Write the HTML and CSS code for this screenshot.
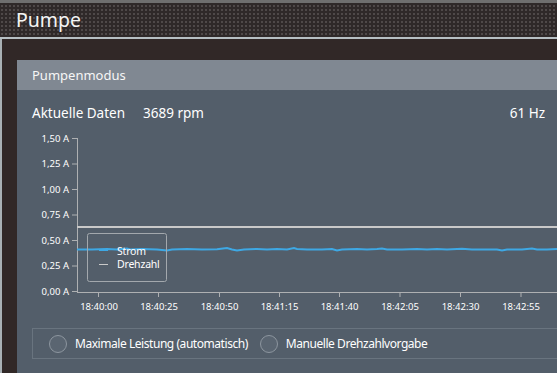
FILE: index.html
```html
<!DOCTYPE html>
<html lang="de">
<head>
    <meta charset="UTF-8">
    <title>Pumpe</title>
    <link rel="stylesheet" href="styles.css">
</head>
<body>
    <div class="topline"></div>
    <header class="page-header">Pumpe</header>
    <div class="header-rule"></div>

    <div class="main">
        <div class="side-strip"></div>
        <div class="content">
            <section class="panel">
                <div class="panel-head">Pumpenmodus</div>
                <div class="panel-body">
                    <div class="data-row">
                        <span class="data-label">Aktuelle Daten</span>
                        <span class="data-rpm">3689 rpm</span>
                        <span class="data-hz">61 Hz</span>
                    </div>

                    <!-- Strom / Drehzahl chart -->
                    <svg class="chart" width="525" height="185" viewBox="0 0 525 185">
                        <g class="y-labels">
                            <text x="37" y="11.5">1,50 A</text>
                            <text x="37" y="37">1,25 A</text>
                            <text x="37" y="62.5">1,00 A</text>
                            <text x="37" y="88">0,75 A</text>
                            <text x="37" y="113.5">0,50 A</text>
                            <text x="37" y="139">0,25 A</text>
                            <text x="37" y="164.5">0,00 A</text>
                        </g>
                        <g class="axis">
                            <line x1="45.5" y1="8" x2="45.5" y2="162"/>
                            <line x1="45" y1="162.5" x2="525" y2="162.5"/>
                            <line x1="40" y1="8.5" x2="45" y2="8.5"/>
                            <line x1="40" y1="34" x2="45" y2="34"/>
                            <line x1="40" y1="59.5" x2="45" y2="59.5"/>
                            <line x1="40" y1="85" x2="45" y2="85"/>
                            <line x1="40" y1="110.5" x2="45" y2="110.5"/>
                            <line x1="40" y1="136" x2="45" y2="136"/>
                            <line x1="40" y1="161.5" x2="45" y2="161.5"/>
                            <line x1="66.5" y1="162" x2="66.5" y2="167"/>
                            <line x1="126.5" y1="162" x2="126.5" y2="167"/>
                            <line x1="187.5" y1="162" x2="187.5" y2="167"/>
                            <line x1="247.5" y1="162" x2="247.5" y2="167"/>
                            <line x1="307.5" y1="162" x2="307.5" y2="167"/>
                            <line x1="368" y1="162" x2="368" y2="167"/>
                            <line x1="428.5" y1="162" x2="428.5" y2="167"/>
                            <line x1="489" y1="162" x2="489" y2="167"/>
                        </g>
                        <g class="x-labels">
                            <text x="67" y="180">18:40:00</text>
                            <text x="127" y="180">18:40:25</text>
                            <text x="187.5" y="180">18:40:50</text>
                            <text x="247.5" y="180">18:41:15</text>
                            <text x="307.5" y="180">18:41:40</text>
                            <text x="368" y="180">18:42:05</text>
                            <text x="428.5" y="180">18:42:30</text>
                            <text x="489" y="180">18:42:55</text>
                        </g>
                        <line class="series-speed" x1="45" y1="97" x2="525" y2="97"/>
                        <polyline class="series-current" points="45,119.5 60,119.5 75,119 85,119.5 95,118.5 98,119.5 110,119 125,119.5 135,120.5 140,119.5 155,119 170,119.5 185,119.2 195,118 200,119.5 205,120.5 212,119.5 225,119 235,119.5 245,119 255,119.5 262,118 265,119 275,119.5 290,119.5 300,119 305,120.5 310,119.5 325,119 335,119.5 345,119 350,118.5 355,119.5 370,119.5 385,119 395,119.5 405,119 415,119.5 425,119 430,118.8 440,119.5 455,119.5 465,119.5 470,120.5 475,119.5 490,119.5 500,118.5 505,119.5 515,119.5 525,119"/>
                        <rect class="legend-box" x="55.5" y="103.5" width="79" height="48" rx="2"/>
                        <line class="legend-current" x1="67" y1="120.5" x2="76" y2="120.5"/>
                        <line class="legend-speed" x1="67" y1="134.5" x2="76" y2="134.5"/>
                        <text class="legend-text" x="85" y="125">Strom</text>
                        <text class="legend-text" x="85" y="138">Drehzahl</text>
                    </svg>

                    <div class="mode-group">
                        <label class="mode-option">
                            <span class="radio"></span>
                            Maximale Leistung (automatisch)
                        </label>
                        <label class="mode-option">
                            <span class="radio"></span>
                            Manuelle Drehzahlvorgabe
                        </label>
                    </div>
                </div>
            </section>
        </div>
    </div>
</body>
</html>
```

FILE: styles.css
```css
* {
    margin: 0;
    padding: 0;
    box-sizing: border-box;
}

body {
    width: 557px;
    height: 373px;
    overflow: hidden;
    background: #312827;
    color: #fff;
    font-family: 'Noto Sans', 'Open Sans', sans-serif;
}

/* Page header */
.topline {
    height: 3px;
    background: #6f6f6f;
}

.page-header {
    height: 34px;
    padding-left: 16px;
    background-color: #2f2929;
    background-image: radial-gradient(#4f4949 1px, transparent 1.2px);
    background-size: 4px 4px;
    background-position: 0 1px;
    font-size: 19.5px;
    line-height: 34px;
    color: #f4f4f4;
}

.header-rule {
    height: 2px;
    background: #b7bfc3;
}

.main {
    display: flex;
    height: 334px;
}

.side-strip {
    width: 2px;
    background: #a9b1b5;
}

.content {
    flex: 1;
    padding: 21px 0 0 15px;
    overflow: hidden;
}

/* Panel */
.panel {
    width: 560px;
}

.panel-head {
    height: 30px;
    padding-left: 15px;
    background: #808892;
    font-size: 13px;
    line-height: 30px;
    color: #f6f6f6;
}

.panel-body {
    background: #535e6a;
    padding: 13px 0 20px 15px;
    height: 300px;
}

.data-row {
    display: flex;
    width: 513px;
    font-size: 13.5px;
    line-height: 20px;
}

.data-label {
    width: 111px;
}

.data-hz {
    margin-left: auto;
}

/* Chart */
.chart {
    display: block;
    margin-top: 7px;
    overflow: visible;
}

.chart text {
    font-family: 'Noto Sans', 'Open Sans', sans-serif;
    fill: #fff;
}

.y-labels text {
    font-size: 9.5px;
    text-anchor: end;
}

.x-labels text {
    font-size: 9.5px;
    text-anchor: middle;
}

.axis line {
    stroke: #aeb0b2;
    stroke-width: 1;
}

.series-speed {
    stroke: #c9c9c9;
    stroke-width: 2;
}

.series-current {
    fill: none;
    stroke: #3ea8e4;
    stroke-width: 2;
}

.legend-box {
    fill: none;
    stroke: #a3a8ad;
    stroke-width: 1;
}

.legend-current {
    stroke: #3ea8e4;
    stroke-width: 1;
}

.legend-speed {
    stroke: #c9c9c9;
    stroke-width: 1;
}

.legend-text {
    font-size: 10.5px;
    letter-spacing: -0.2px;
}

/* Pump mode selection */
.mode-group {
    display: flex;
    align-items: center;
    gap: 12px;
    height: 31px;
    margin-top: 13px;
    padding-left: 16px;
    border: 1px solid #69747f;
    border-right: none;
}

.mode-option {
    display: flex;
    align-items: center;
    gap: 8px;
    font-size: 12px;
    letter-spacing: -0.45px;
    color: #fff;
}

.radio {
    width: 18px;
    height: 18px;
    border: 1.5px solid #8d969f;
    border-radius: 50%;
    background: #5a6571;
}
```
